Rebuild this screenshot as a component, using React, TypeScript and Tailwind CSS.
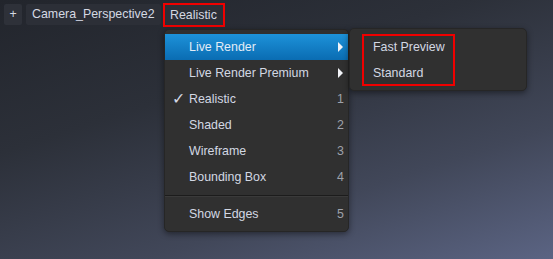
import React from 'react';

type Item = {
  label: string;
  key?: string;
  sub?: boolean;
  checked?: boolean;
  active?: boolean;
};

const items: Item[] = [
  { label: 'Live Render', sub: true, active: true },
  { label: 'Live Render Premium', sub: true },
  { label: 'Realistic', key: '1', checked: true },
  { label: 'Shaded', key: '2' },
  { label: 'Wireframe', key: '3' },
  { label: 'Bounding Box', key: '4' },
];

function Arrow() {
  return (
    <svg width="6" height="10" viewBox="0 0 6 10" className="absolute right-[4px]">
      <polygon points="0,0 5,5 0,10" fill="#f2f4f8" />
    </svg>
  );
}

function Row({ item }: { item: Item }) {
  return (
    <div
      className={`relative flex h-[26px] items-center ${
        item.active ? 'bg-[linear-gradient(#1d92d9,#0a6cb2)] text-[#e3ecf6]' : 'text-[#d3d8e3]'
      }`}
    >
      {item.checked && <span className="absolute left-[7px] text-[16px] font-light text-[#d3d8e3]">✓</span>}
      <span className="pl-[24px]">{item.label}</span>
      {item.key && <span className="absolute right-[4px] text-[#9ea2ab]">{item.key}</span>}
      {item.sub && <Arrow />}
    </div>
  );
}

export default function App() {
  return (
    <div
      className="relative h-[259px] w-full overflow-hidden bg-[linear-gradient(162deg,#22252c_0%,#2c3039_35%,#414759_70%,#5b6483_100%)] text-[12.4px] leading-none"
      style={{ fontFamily: '"Liberation Sans", Arial, "DejaVu Sans", sans-serif' }}
    >
      <div className="flex items-start pl-[4px] pt-[4px] text-[#d5d9e3]">
        <div className="flex h-[21px] w-[18px] items-center justify-center rounded-[2px] bg-[#2e3139]">+</div>
        <div className="ml-[4px] flex h-[21px] w-[135px] items-center rounded-[2px] bg-[#2c2f37] pl-[6px]">
          Camera_Perspective2
        </div>
        <div className="-mt-px ml-[2px] flex h-[24px] w-[62px] items-center border-2 border-[#f00000] bg-[#2c2f37] pl-[5px]">
          Realistic
        </div>
      </div>

      <div className="absolute left-[164px] top-[29px] w-[185px] rounded-[5px] border border-[#262626] bg-[#303030] pb-[4px] pt-[4px] shadow-[0_2px_6px_rgba(0,0,0,0.45)]">
        {items.map((it) => (
          <Row key={it.label} item={it} />
        ))}
        <div className="mb-[4px] mt-[5px] border-b border-t border-b-[#3a3a3a] border-t-[#1c1c1c]" />
        <Row item={{ label: 'Show Edges', key: '5' }} />
      </div>

      <div className="absolute left-[349px] top-[28px] h-[63px] w-[178px] rounded-[5px] border border-[#262626] bg-[#303030] pl-[12px] pt-[5px] shadow-[0_2px_6px_rgba(0,0,0,0.45)]">
        <div className="flex w-[93px] flex-col gap-[4px] border-2 border-[#f00000] pl-[9px] text-[#d3d8e3]">
          <div className="flex h-[22px] items-center">Fast Preview</div>
          <div className="flex h-[22px] items-center">Standard</div>
        </div>
      </div>
    </div>
  );
}
